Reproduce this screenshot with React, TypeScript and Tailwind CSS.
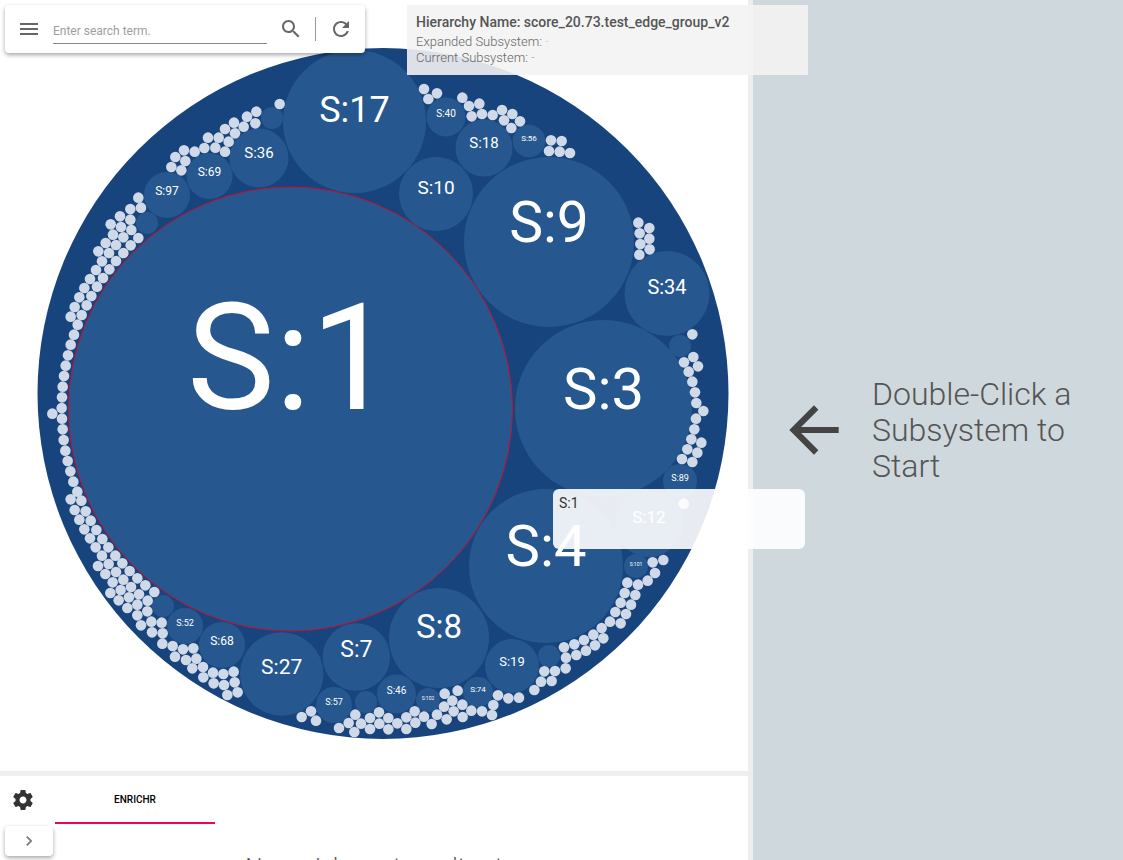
import React from "react";

type Bubble = { x: number; y: number; r: number; label?: string; size?: number };

const bubbles: Bubble[] = [
  { x: 354.5, y: 121.5, r: 71.5, label: "S:17", size: 36 },
  { x: 549, y: 242, r: 85, label: "S:9", size: 57 },
  { x: 436, y: 194, r: 37, label: "S:10", size: 19 },
  { x: 484, y: 148, r: 28.5, label: "S:18", size: 15 },
  { x: 446, y: 117, r: 19.5, label: "S:40", size: 10 },
  { x: 529, y: 141, r: 16.3, label: "S:56", size: 8 },
  { x: 259, y: 158, r: 29.5, label: "S:36", size: 15 },
  { x: 209.5, y: 176, r: 23, label: "S:69", size: 12 },
  { x: 167, y: 195, r: 23, label: "S:97", size: 12 },
  { x: 272, y: 118, r: 11 },
  { x: 147, y: 223, r: 11 },
  { x: 667, y: 293.5, r: 42.5, label: "S:34", size: 20 },
  { x: 603.5, y: 408.5, r: 88.5, label: "S:3", size: 58 },
  { x: 680, y: 346, r: 11 },
  { x: 680, y: 481, r: 17, label: "S:89", size: 9 },
  { x: 649, y: 523, r: 34, label: "S:12", size: 17 },
  { x: 546, y: 566, r: 77, label: "S:4", size: 58 },
  { x: 439, y: 638, r: 50, label: "S:8", size: 33 },
  { x: 356.3, y: 657, r: 33.7, label: "S:7", size: 23 },
  { x: 512, y: 666, r: 27, label: "S:19", size: 13 },
  { x: 396.5, y: 694, r: 19.5, label: "S:46", size: 10 },
  { x: 428, y: 700, r: 12, label: "S:102", size: 5 },
  { x: 478, y: 692, r: 15, label: "S:74", size: 8 },
  { x: 334, y: 705, r: 18, label: "S:57", size: 9 },
  { x: 366, y: 702, r: 11 },
  { x: 636, y: 566, r: 12, label: "S:101", size: 5 },
  { x: 549, y: 656, r: 11 },
  { x: 281.7, y: 674, r: 41.7, label: "S:27", size: 21 },
  { x: 222, y: 645, r: 23, label: "S:68", size: 12 },
  { x: 185, y: 626, r: 18, label: "S:52", size: 9 },
  { x: 163, y: 606, r: 11 },
];

// dot positions read off 3x crops: [offsetX, offsetY, [x, y, x, y...]]
const dotGroups: [number, number, number[]][] = [
  [0, 0, [839,312,769,335,766,370,741,350,731,380,702,368,705,400,675,387,686,425,656,413,675,455,646,443,624,413,613,444,584,455,552,451,556,483,526,471,514,501,544,511,415,593,391,627,423,623]],
  [30, 200, [270,49,301,59,242,73,273,81,304,90,249,104,280,112,325,114,227,129,258,135,302,136,205,154,237,159,280,159,216,184,258,183,198,210,238,208,180,237,219,234,163,264,201,260,148,292,184,288,134,321,170,316,122,350,155,345,143,374,132,404,122,434,114,466,107,497,102,528,98,560,96,592,95,624,67,641,96,656,98,688,101,720,106,752,113,783,121,814,130,845,142,875,122,898,154,902]],
  [60, 480, [44,90,77,94,58,119,92,122,73,148,109,150,90,175,127,177,107,202,145,202,126,227,166,227,114,258,146,252,187,250,136,282,168,276,209,273,158,307,190,299,232,295,151,339,182,330,213,321,256,316,176,361,207,352,237,343,283,336,202,384,232,374,263,362,232,406,262,394,243,436,274,425,305,428,276,457,308,460,307,491,338,498,369,508,400,505,345,530,378,540,409,536,397,565,429,561,430,592,459,578,490,582,521,575,461,610,492,615,524,607,502,645,533,637]],
  [280, 540, [65,531,93,514,108,542,177,564,206,549,226,524,223,576,243,551,270,534,270,567,297,517,298,551,325,534,325,568,352,550,379,532,404,514,406,548,379,567,432,530,455,552,471,524,492,500,500,538,494,461,517,482,521,514,533,452,547,494,548,531,574,512,606,514,636,525,640,495,654,466,685,475,717,473,763,450,783,425,815,423,793,394,825,393,857,385,858,353,852,322,889,345,883,313,912,300,918,332,945,316,940,284,970,295,965,264,990,245,1022,250,1006,216,1038,222,1022,188,1053,194,1034,159,1066,165,1042,128,1074,134,1103,122,1125,99,1118,67,1150,60]],
  [400, 0, [72,267,85,297,111,280,187,293,207,318,238,311,215,349,246,342,278,345,306,330,337,342,312,361,360,364,334,384,453,421,485,423,447,453,479,455,510,459,715,668,748,684,719,700,748,716,721,732,749,748,718,764]],
  [540, 260, [457,223,460,291,432,307,474,319,446,335,457,365,465,397,469,429,490,453,468,476,463,508,454,538,484,548,442,568,472,578,426,597,457,606,431,731]],
];

const dots: [number, number][] = dotGroups.flatMap(([ox, oy, list]) => {
  const out: [number, number][] = [];
  for (let i = 0; i < list.length; i += 2) {
    out.push([ox + list[i] / 3, oy + list[i + 1] / 3]);
  }
  return out;
});

function Icon({ d, className }: { d: string; className: string }) {
  return (
    <svg viewBox="0 0 24 24" className={className} fill="currentColor">
      <path d={d} />
    </svg>
  );
}

const MENU = "M3 18h18v-2H3v2zm0-5h18v-2H3v2zm0-7v2h18V6H3z";
const SEARCH =
  "M15.5 14h-.79l-.28-.27C15.41 12.59 16 11.11 16 9.5 16 5.91 13.09 3 9.5 3S3 5.91 3 9.5 5.91 16 9.5 16c1.61 0 3.09-.59 4.23-1.57l.27.28v.79l5 4.99L20.49 19l-4.99-5zm-6 0C7.01 14 5 11.99 5 9.5S7.01 5 9.5 5 14 7.01 14 9.5 11.99 14 9.5 14z";
const REFRESH =
  "M17.65 6.35C16.2 4.9 14.21 4 12 4c-4.42 0-7.99 3.58-7.99 8s3.57 8 7.99 8c3.73 0 6.84-2.55 7.73-6h-2.08c-.82 2.33-3.04 4-5.65 4-3.31 0-6-2.69-6-6s2.69-6 6-6c1.66 0 3.14.69 4.22 1.78L13 11h7V4l-2.35 2.35z";
const SETTINGS =
  "M19.43 12.98c.04-.32.07-.64.07-.98s-.03-.66-.07-.98l2.11-1.65c.19-.15.24-.42.12-.64l-2-3.46c-.12-.22-.39-.3-.61-.22l-2.49 1c-.52-.4-1.08-.73-1.69-.98l-.38-2.65C14.46 2.18 14.25 2 14 2h-4c-.25 0-.46.18-.49.42l-.38 2.65c-.61.25-1.17.59-1.69.98l-2.49-1c-.23-.09-.49 0-.61.22l-2 3.46c-.13.22-.07.49.12.64l2.11 1.65c-.04.32-.07.65-.07.98s.03.66.07.98l-2.11 1.65c-.19.15-.24.42-.12.64l2 3.46c.12.22.39.3.61.22l2.49-1c.52.4 1.08.73 1.69.98l.38 2.65c.03.24.24.42.49.42h4c.25 0 .46-.18.49-.42l.38-2.65c.61-.25 1.17-.59 1.69-.98l2.49 1c.23.09.49 0 .61-.22l2-3.46c.12-.22.07-.49-.12-.64l-2.11-1.65zM12 15.5c-1.93 0-3.5-1.57-3.5-3.5s1.57-3.5 3.5-3.5 3.5 1.57 3.5 3.5-1.57 3.5-3.5 3.5z";
const CHEVRON = "M10 6L8.59 7.41 13.17 12l-4.58 4.59L10 18l6-6z";
const ARROW = "M20 11H7.83l5.59-5.59L12 4l-8 8 8 8 1.41-1.41L7.83 13H20v-2z";

function CirclePack() {
  return (
    <svg width={748} height={771} viewBox="0 0 748 771" className="block">
      <circle cx={383} cy={393.5} r={345.5} fill="#18447e" />
      <circle cx={290.5} cy={409} r={222} fill="#26588f" stroke="#c8102e" strokeWidth={1} />
      {bubbles.map((b, i) => (
        <circle key={i} cx={b.x} cy={b.y} r={b.r} fill="#26588f" />
      ))}
      {dots.map(([x, y], i) => (
        <circle key={i} cx={x} cy={y} r={5.3} fill="#d0d9e8" />
      ))}
      <text x={290.5} y={409} textAnchor="middle" fontSize={148} fill="#fff">
        S:1
      </text>
      {bubbles
        .filter((b) => b.label)
        .map((b) => (
          <text key={b.label} x={b.x} y={b.y} textAnchor="middle" fontSize={b.size} fill="#fff">
            {b.label}
          </text>
        ))}
    </svg>
  );
}

export default function App() {
  return (
    <div className="relative flex h-[860px] w-full overflow-hidden bg-white font-['Roboto',sans-serif]">
      <div className="flex w-[748px] shrink-0 flex-col">
        <div className="h-[771px] shrink-0">
          <CirclePack />
        </div>
        <div className="h-[5px] shrink-0 bg-[#eeeeee]" />
        <div className="flex-1 overflow-hidden">
          <div className="flex h-[48px] items-center">
            <div className="flex w-[55px] justify-center pl-[-9px]">
              <Icon d={SETTINGS} className="mr-[9px] h-6 w-6 text-[#333333]" />
            </div>
            <div className="flex h-[48px] w-[160px] items-center justify-center border-b-2 border-[#f50057] text-[10px] font-medium text-black">
              ENRICHR
            </div>
          </div>
          <div className="pt-[27px] text-center text-2xl font-light text-[#555555]">
            No enrichment result yet
          </div>
        </div>
      </div>
      <div className="w-[5px] shrink-0 bg-[#eeeeee]" />
      <div className="flex flex-1 items-center bg-[#cfd8dc] pl-6">
        <Icon d={ARROW} className="h-[74px] w-[74px] shrink-0 text-[#444444]" />
        <div className="ml-[21px] w-[230px] text-[32px] leading-9 font-light text-[#555555]">
          Double-Click a Subsystem to Start
        </div>
      </div>

      <div className="absolute top-[5px] left-[5px] flex h-[48px] w-[360px] items-center rounded-sm bg-white shadow-[0_2px_4px_rgba(0,0,0,0.35)]">
        <Icon d={MENU} className="ml-3 h-6 w-6 text-[#666666]" />
        <div className="mt-[5px] ml-3 flex h-6 w-[214px] items-center border-b border-[#8a8a8a] text-xs text-[#9e9e9e]">
          Enter search term.
        </div>
        <Icon d={SEARCH} className="ml-3 h-6 w-6 text-[#666666]" />
        <div className="ml-[12px] h-6 w-px bg-[#999999]" />
        <Icon d={REFRESH} className="ml-[13px] h-6 w-6 text-[#666666]" />
      </div>

      <div className="absolute top-[5px] left-[407px] h-[70px] w-[401px] bg-[#f3f3f3]/90 px-[9px] pt-[8px] text-[13px] leading-4 font-light text-[#666666]">
        <div className="mb-[3px] text-sm leading-[18px] font-medium text-[#555555]">
          Hierarchy Name: score_20.73.test_edge_group_v2
        </div>
        <div>
          Expanded Subsystem: <span className="text-[#f5c98a]">-</span>
        </div>
        <div>
          Current Subsystem: <span className="text-[#f08a8a]">-</span>
        </div>
      </div>

      <div className="absolute top-[489px] left-[553px] h-[60px] w-[252px] rounded-md bg-white/90 px-[6px] py-[5px] text-sm leading-[18px] text-[#333333]">
        S:1
      </div>

      <div className="absolute top-[826px] left-[5px] flex h-[30px] w-[48px] items-center justify-center rounded-sm bg-white shadow-[0_2px_4px_rgba(0,0,0,0.35)]">
        <Icon d={CHEVRON} className="h-5 w-5 text-[#777777]" />
      </div>
    </div>
  );
}
